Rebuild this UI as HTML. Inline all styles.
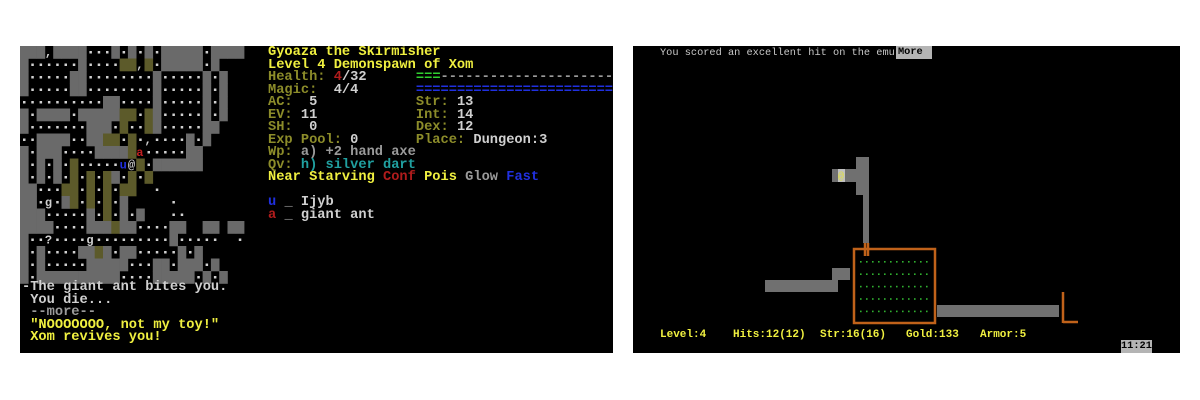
<!DOCTYPE html>
<html><head><meta charset="utf-8"><style>
html,body{margin:0;padding:0;background:#fff;width:1200px;height:400px;overflow:hidden;position:relative}
.p{position:absolute;background:#000;overflow:hidden}
pre{margin:0;position:absolute;font-family:"Liberation Mono",monospace;font-weight:bold;white-space:pre}
.L{font-size:13.7px;line-height:12.5px;color:#c8c8c8}
.y{color:#f0f040}.o{color:#8c8c2a}.r{color:#b01c1c}.b{color:#2030e0}.t{color:#20a0a0}.g{color:#9a9a9a}.gr{color:#30d030}.w{color:#d0d0d0}
.R{font-size:10.3px;line-height:12px;font-weight:normal}
.S{font-size:11px;line-height:12px;color:#f0f040;font-weight:bold;top:329px}
</style></head><body>
<div class="p" style="left:20px;top:46px;width:593px;height:307px">
<svg id="map" style="position:absolute;left:0;top:0" width="230" height="240"></svg>
<pre class="L" style="left:248px;top:1px"><span class="y">Gyoaza the Skirmisher
Level 4 Demonspawn of Xom</span>
<span class="o">Health: </span><span class="r">4</span><span class="w">/32</span>      <span class="gr">===</span><span class="g">-------------------------</span>
<span class="o">Magic:  </span><span class="w">4/4</span>       <span class="b">============================</span>
<span class="o">AC:  </span><span class="w">5</span>            <span class="o">Str: </span><span class="w">13</span>
<span class="o">EV: </span><span class="w">11</span>            <span class="o">Int: </span><span class="w">14</span>
<span class="o">SH:  </span><span class="w">0</span>            <span class="o">Dex: </span><span class="w">12</span>
<span class="o">Exp Pool: </span><span class="w">0</span>       <span class="o">Place: </span><span class="w">Dungeon:3</span>
<span class="o">Wp: </span><span class="g">a) +2 hand axe</span>
<span class="o">Qv: </span><span class="t">h) silver dart</span>
<span class="y">Near Starving </span><span class="r">Conf </span><span class="y">Pois </span><span class="g">Glow </span><span class="b">Fast</span>

<span class="b">u</span> <span class="g">_</span> <span class="w">Ijyb</span>
<span class="r">a</span> <span class="g">_</span> <span class="w">giant ant</span></pre>
<pre class="L" style="left:2px;top:236px"><span class="w">-The giant ant bites you.
 You die...
 <span class="g">--more--</span></span>
<span class="y"> "NOOOOOOO, not my toy!"
 Xom revives you!</span></pre>
</div>

<div class="p" style="left:633px;top:46px;width:547px;height:307px"></div>
<pre class="R" style="left:660px;top:47px;color:#c8c8c8">You scored an excellent hit on the emu</pre>
<pre class="R" style="left:896px;top:46px;width:34px;height:13px;background:#b4b4b4;color:#000;font-weight:bold;padding-left:2px">More</pre>
<svg style="position:absolute;left:0;top:0" width="1200" height="400">
<g fill="#707070">
<rect x="856" y="157" width="13" height="12"/>
<rect x="832" y="169" width="37" height="13"/>
<rect x="856" y="182" width="13" height="13"/>
<rect x="863" y="195" width="6" height="48"/>
<rect x="832" y="268" width="18" height="12"/>
<rect x="765" y="280" width="73" height="12"/>
<rect x="937" y="305" width="122" height="12"/>
</g>
<rect x="838" y="169" width="7" height="13" fill="#c0c0c0"/>
<text x="838" y="179" font-family="Liberation Mono" font-size="10" fill="#e0e040">@</text>
<g fill="none" stroke="#c0621a" stroke-width="2.5">
<rect x="854" y="249" width="81" height="74"/>
<line x1="865" y1="243" x2="865" y2="256"/><line x1="868" y1="243" x2="868" y2="256"/>
<line x1="1063" y1="292" x2="1063" y2="323"/><line x1="1063" y1="322" x2="1078" y2="322"/>
</g>
<g id="dots" fill="#30b030"></g>
</svg>
<pre class="S" style="left:660px">Level:4</pre>
<pre class="S" style="left:733px">Hits:12(12)</pre>
<pre class="S" style="left:820px">Str:16(16)</pre>
<pre class="S" style="left:906px">Gold:133</pre>
<pre class="S" style="left:980px">Armor:5</pre>
<pre class="R" style="left:1121px;top:340px;width:31px;height:13px;background:#b4b4b4;color:#000;font-weight:bold">11:21</pre>
<script>
var m=[
"###,####...#.#.#.#####.####",
"#......#....yy,y.#####.#   ",
"#.....##........#.....#.#  ",
"#.....##........#.....#.#  ",
"..........##....#.....#.#  ",
"#.####.#####yy.y#.....#.#  ",
"#.......###.y..y#.....##   ",
"..####..##yy.y.,....#.#    ",
"#.###....####ya.....##     ",
"#.#.#.y.....u@y.######     ",
"#.#.#.y.y.y#.y.y           ",
"##...yy.y.y.yy  .          ",
"##.g.#y.y.y.#     .        ",
"###.....#.y.#.#   ..       ",
"####....###y##....##  ## ##",
"#..?....g.........#.....  .",
"#.#....##y#.##.....#.#     ",
"#.#.....#####...##.###.#   ",
"#.##########....#####.#.#  "];
var s="",W=8.3,H=12.5;
for(var r=0;r<m.length;r++)for(var c=0;c<m[r].length;c++){var ch=m[r][c],x=c*W,y=r*H;
if(ch=="#")s+='<rect x="'+x+'" y="'+y+'" width="'+(W+.3)+'" height="'+(H+.3)+'" fill="#6a6a6a"/>';
else if(ch=="y")s+='<rect x="'+x+'" y="'+y+'" width="'+(W+.3)+'" height="'+(H+.3)+'" fill="#5c5a2a"/>';
else if(ch==".")s+='<rect x="'+(x+3)+'" y="'+(y+5)+'" width="2.5" height="2.5" fill="#d0d0d0"/>';
else if(ch!=" "){var col=ch=="a"?"#c02020":ch=="u"?"#2030e0":"#d0d0d0";s+='<text x="'+x+'" y="'+(y+10)+'" font-family="Liberation Mono" font-weight="bold" font-size="12" fill="'+col+'">'+ch+'</text>';}}
document.getElementById("map").innerHTML=s;
var d="";for(var i=0;i<5;i++)for(var j=0;j<12;j++)d+='<rect x="'+(860+j*6)+'" y="'+(261+i*12.4)+'" width="1.6" height="1.6"/>';
document.getElementById("dots").innerHTML=d;
</script>
</body></html>
